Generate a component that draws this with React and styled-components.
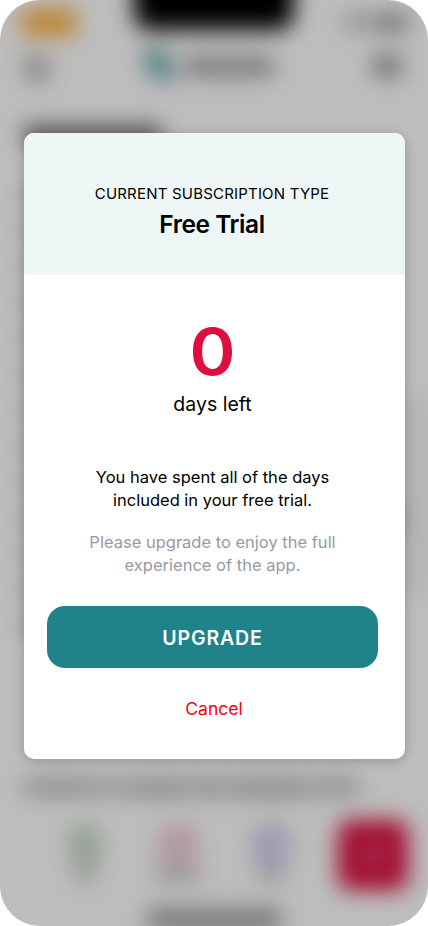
import styled, { createGlobalStyle } from "styled-components";

const GlobalStyle = createGlobalStyle`
  * {
    box-sizing: border-box;
  }
  body {
    margin: 0;
    background: #fff;
    font-family: Inter, "Liberation Sans", sans-serif;
  }
`;

const Phone = styled.div`
  display: grid;
  width: 428px;
  height: 926px;
  border-radius: 40px;
  overflow: hidden;
  background: #fff;
`;

/* shares its grid cell with the scrim; the negative margin
   keeps the faded edge of the blur outside of the phone */
const Backdrop = styled.div`
  grid-area: 1 / 1;
  display: flex;
  flex-direction: column;
  width: 488px;
  height: 986px;
  margin: -30px;
  padding: 0 30px;
  overflow: hidden;
  background: #fff;
  filter: blur(11px);
`;

const Scrim = styled.div`
  grid-area: 1 / 1;
  z-index: 1;
  display: flex;
  flex-direction: column;
  align-items: flex-start;
  padding: 133px 0 0 24px;
  background: rgba(0, 0, 0, 0.26);
`;

const Shape = styled.div`
  width: ${(p) => p.$w}px;
  height: ${(p) => p.$h}px;
  border-radius: ${(p) => p.$r || 3}px;
  background: ${(p) => p.$color || "#a6a6a6"};
`;

const StatusBar = styled.div`
  display: flex;
  flex: none;
  justify-content: space-between;
  height: 74px;
  padding: 0 20px 0 21px;
`;

const Time = styled(Shape)`
  margin-top: 39px;
`;

const Notch = styled.div`
  width: 160px;
  height: 60px;
  margin-left: 7px;
  border-radius: 0 0 16px 16px;
  background: #000;
`;

const Signals = styled.div`
  display: flex;
  gap: 2px;
  padding-top: 44px;
`;

const AppBar = styled.div`
  display: flex;
  flex: none;
  align-items: center;
  justify-content: space-between;
  height: 44px;
  padding: 0 27px 0 25px;
`;

const MenuIcon = styled(Shape)`
  margin-top: 4px;
`;

const Brand = styled.div`
  display: flex;
  align-items: center;
  gap: 10px;
  margin-left: -8px;
`;

const Page = styled.div`
  display: flex;
  flex: none;
  flex-direction: column;
  height: 712px;
  padding: 38px 24px 0;
`;

const Lines = styled.div`
  display: flex;
  flex-direction: column;
  gap: 22px;
  margin: 44px 0 0 -2px;
`;

const Panel = styled.div`
  flex: none;
  width: 404px;
  height: 200px;
  margin-top: -238px;
  background: rgba(190, 204, 180, 0.22);
`;

const Caption = styled.div`
  display: flex;
  gap: 3px;
  margin-top: auto;
  padding-bottom: 3px;
`;

const TabBar = styled.div`
  display: flex;
  flex: none;
  align-items: flex-start;
  height: 80px;
  padding: 20px 20px 0 39px;
`;

const Tab = styled.div`
  display: flex;
  flex-direction: column;
  align-items: center;
  gap: 3px;
  width: 93px;
  padding-top: 4px;
`;

const TabIcon = styled.div`
  width: ${(p) => p.$w}px;
  height: 43px;
  border: 5px solid ${(p) => p.$color};
  border-radius: 18px;
  background: ${(p) => p.$fill};
`;

const AddButton = styled.div`
  display: flex;
  align-items: center;
  justify-content: center;
  width: 70px;
  height: 70px;
  margin: 0 0 0 21px;
  border-radius: 12px;
  background: #dc0f40;
`;

const HomeIndicator = styled.div`
  flex: none;
  width: 134px;
  height: 24px;
  margin: 28px auto 0;
  background: #a4a4a4;
`;

const Dialog = styled.section`
  display: flex;
  flex-direction: column;
  width: 381px;
  height: 626px;
  border-radius: 10px;
  overflow: hidden;
  text-align: center;
  color: #000;
  background: #fff;
  box-shadow: 0 2px 12px rgba(0, 0, 0, 0.22);
`;

const Header = styled.header`
  height: 142px;
  padding: 50px 5px 0 0;
  background: #eef7f6;
`;

const Overline = styled.div`
  font-size: 15px;
  line-height: 22px;
  letter-spacing: 0.2px;
`;

const Plan = styled.h1`
  margin: 4px 0 0;
  font-size: 24.5px;
  font-weight: 600;
  line-height: 30px;
  letter-spacing: -0.45px;
`;

const Body = styled.div`
  display: flex;
  flex-direction: column;
  padding: 43px 27px 0 23px;
`;

const Count = styled.div`
  font-size: 64px;
  font-weight: 600;
  line-height: 68px;
  color: #dc0f40;
  transform: scaleX(1.09);
`;

const Unit = styled.div`
  margin-top: 5px;
  font-size: 19.5px;
  line-height: 26px;
`;

const Message = styled.p`
  margin: ${(p) => p.$top}px 0 0;
  font-size: 16.5px;
  line-height: 23px;
  color: ${(p) => (p.$muted ? "#9899a5" : "#000")};
`;

const Upgrade = styled.button`
  height: 62px;
  margin-top: 29px;
  padding: 2px 0 0;
  border: 0;
  border-radius: 18px;
  font: 600 19.5px/60px Inter, "Liberation Sans", sans-serif;
  letter-spacing: 0.9px;
  color: #fff;
  background: #20838a;
`;

const Cancel = styled.button`
  align-self: center;
  margin-top: 28px;
  padding: 0 0 0 3px;
  border: 0;
  font: 400 17.5px/26px Inter, "Liberation Sans", sans-serif;
  color: #f00;
  background: none;
`;

const WIDTHS = [350, 350, 342, 365, 350, 340, 346, 360, 352, 380, 350, 356, 344];

const Background = () => (
  <Backdrop aria-hidden="true">
    <StatusBar>
      <Time $w={56} $h={27} $r={6} $color="#ffb144" />
      <Notch />
      <Signals>
        <Shape $w={32} $h={16} $color="#c0c0c0" />
        <Shape $w={30} $h={17} $color="#909090" />
      </Signals>
    </StatusBar>
    <AppBar>
      <MenuIcon $w={23} $h={23} $color="#acacac" />
      <Brand>
        <svg width="34" height="34" viewBox="0 0 34 34" fill="#72a9ad">
          <path d="M2 0h21l10 13v19H18L6 20z" />
        </svg>
        <Shape $w={90} $h={19} $color="#a0a0a0" />
      </Brand>
      <Shape $w={28} $h={22} $color="#979797" />
    </AppBar>
    <Page>
      <Shape $w={138} $h={18} $color="#606060" />
      <Lines>
        {WIDTHS.map((width, i) => (
          <Shape key={i} $w={width} $h={14} $color="#bbb" />
        ))}
      </Lines>
      <Panel />
      <Caption>
        <Shape $w={74} $h={17} $color="#bcbcbc" />
        <Shape $w={24} $h={17} $color="#c0c0c0" />
        <Shape $w={62} $h={18} $color="#bababa" />
        <Shape $w={34} $h={17} $color="#b8b8b8" />
        <Shape $w={80} $h={18} $color="#b8b8b8" />
        <Shape $w={46} $h={16} $color="#bababa" />
      </Caption>
    </Page>
    <TabBar>
      <Tab>
        <TabIcon $w={32} $color="#b4d0b4" $fill="#cbdccb" />
        <Shape $w={22} $h={10} $color="#b0b0b0" />
      </Tab>
      <Tab>
        <TabIcon $w={40} $color="#edbed0" $fill="#eed0db" />
        <Shape $w={46} $h={10} $color="#b4b4b4" />
      </Tab>
      <Tab>
        <TabIcon $w={38} $color="#c6bfea" $fill="#d8d4ee" />
        <Shape $w={28} $h={10} $color="#b8b8b8" />
      </Tab>
      <AddButton>
        <Shape $w={20} $h={18} $color="#e6597c" />
      </AddButton>
    </TabBar>
    <HomeIndicator />
  </Backdrop>
);

const App = () => (
  <>
    <GlobalStyle />
    <Phone>
      <Background />
      <Scrim>
        <Dialog role="dialog" aria-modal="true">
          <Header>
            <Overline>CURRENT SUBSCRIPTION TYPE</Overline>
            <Plan>Free Trial</Plan>
          </Header>
          <Body>
            <Count>0</Count>
            <Unit>days left</Unit>
            <Message $top={49}>
              You have spent all of the days
              <br />
              included in your free trial.
            </Message>
            <Message $top={19} $muted>
              Please upgrade to enjoy the full
              <br />
              experience of the app.
            </Message>
            <Upgrade type="button">UPGRADE</Upgrade>
            <Cancel type="button">Cancel</Cancel>
          </Body>
        </Dialog>
      </Scrim>
    </Phone>
  </>
);

export default App;
